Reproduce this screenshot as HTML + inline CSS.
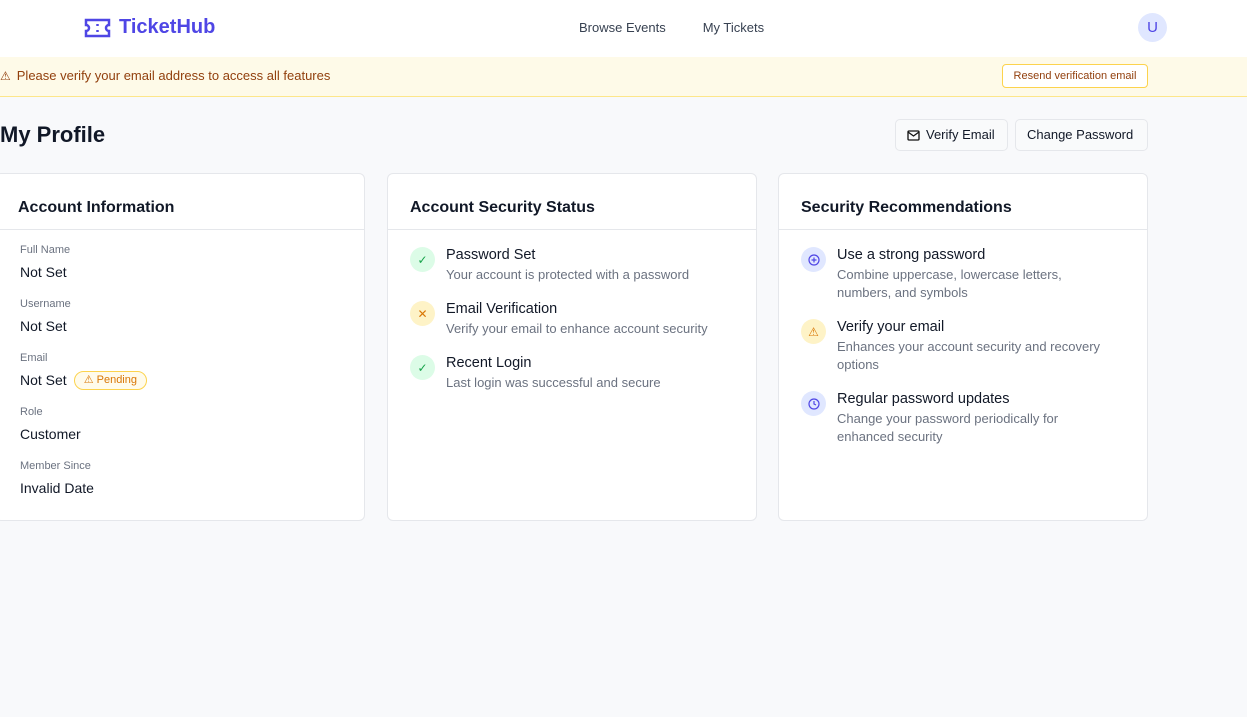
<!DOCTYPE html>
<html><head><meta charset="utf-8"><style>
*{box-sizing:border-box;margin:0;padding:0}
body{width:1247px;height:717px;overflow:hidden;background:#f8f9fb;font-family:"Liberation Sans",sans-serif;color:#111827}
.nav{height:57px;background:#fff;position:relative}
.logo{position:absolute;left:84px;top:16px;display:flex;align-items:center;gap:8px;color:#4f46e5;font-weight:bold;font-size:20px}
.links{position:absolute;left:579px;top:20px;font-size:13px;color:#374151}
.links span{margin-right:37px}
.av{position:absolute;left:1138px;top:13px;width:29px;height:29px;border-radius:50%;background:#e0e7ff;color:#4f46e5;font-size:15px;text-align:center;line-height:29px}
.banner{height:40px;background:#fefae8;border-bottom:1px solid #fde68a;position:relative;font-size:13px;color:#92400e}
.banner .t{position:absolute;left:0;top:11px;display:flex;gap:6px;align-items:center}
.banner .b{position:absolute;left:1002px;top:7px;width:146px;height:24px;border:1px solid #fcd34d;border-radius:4px;background:#fff;font-size:11px;text-align:center;line-height:22px;color:#92400e}
h1{position:absolute;left:0;top:122px;font-size:22px;font-weight:bold}
.btn{position:absolute;top:119px;height:32px;border:1px solid #e5e7eb;border-radius:5px;background:#f9fafb;font-size:13px;line-height:30px;padding:0 11px;display:flex;align-items:center;gap:6px}
.card{position:absolute;top:173px;width:370px;height:348px;background:#fff;border:1px solid #e5e7eb;border-radius:6px}
.card h2{font-size:16px;font-weight:bold;padding:25px 0 0 22px;height:56px;border-bottom:1px solid #e5e7eb}
.lbl{font-size:11px;color:#6b7280;margin-top:18px;line-height:13px}
.lbl:first-child{margin-top:12px}
.val{font-size:14px;margin-top:7px;display:flex;align-items:center;gap:7px;height:16px}
.it{display:flex;gap:11px;margin-bottom:17px}
.ic{width:25px;height:25px;border-radius:50%;flex:none;display:flex;align-items:center;justify-content:center;font-size:12px}
.it b{font-weight:normal;font-size:14.5px;display:block;margin-bottom:3px}
.it p{font-size:13px;color:#6b7280;line-height:18px}
</style></head><body>
<div class="nav">
<div class="logo"><svg width="27" height="20" viewBox="0 0 27 20" fill="none" stroke="#4f46e5" stroke-width="2.5"><path d="M2 2h23v5a3 3 0 0 0 0 6v5H2v-5a3 3 0 0 0 0-6z"/><path d="M13.5 6v2M13.5 12v2"/></svg>TicketHub</div>
<div class="links"><span>Browse Events</span><span>My Tickets</span></div>
<div class="av">U</div>
</div>
<div class="banner"><div class="t"><span style="font-size:12px">⚠</span>Please verify your email address to access all features</div><div class="b">Resend verification email</div></div>
<h1>My Profile</h1>
<div class="btn" style="left:895px;width:113px"><svg width="13" height="11" viewBox="0 0 13 11" fill="none" stroke="#111" stroke-width="1.3"><rect x="1" y="1" width="11" height="9" rx="1"/><path d="M1 2l5.5 4L12 2"/></svg>Verify Email</div>
<div class="btn" style="left:1015px;width:133px">Change Password</div>

<div class="card" style="left:-5px"><h2>Account Information</h2><div style="padding:2px 0 0 24px">
<div class="lbl">Full Name</div><div class="val">Not Set</div>
<div class="lbl">Username</div><div class="val">Not Set</div>
<div class="lbl">Email</div><div class="val">Not Set <span style="font-size:11px;color:#d97706;background:#fffbeb;border:1px solid #fcd34d;border-radius:10px;padding:0 9px;line-height:17px">⚠ Pending</span></div>
<div class="lbl">Role</div><div class="val">Customer</div>
<div class="lbl">Member Since</div><div class="val">Invalid Date</div></div></div>

<div class="card" style="left:387px"><h2>Account Security Status</h2><div style="padding:17px 0 0 22px">
<div class="it"><div class="ic" style="background:#dcfce7;color:#16a34a">✓</div><div><b>Password Set</b><p>Your account is protected with a password</p></div></div>
<div class="it"><div class="ic" style="background:#fef3c7;color:#d97706">✕</div><div><b>Email Verification</b><p>Verify your email to enhance account security</p></div></div>
<div class="it"><div class="ic" style="background:#dcfce7;color:#16a34a">✓</div><div><b>Recent Login</b><p>Last login was successful and secure</p></div></div>
</div></div>

<div class="card" style="left:778px"><h2>Security Recommendations</h2><div style="padding:17px 30px 0 22px">
<div class="it"><div class="ic" style="background:#e0e7ff;color:#4f46e5"><svg width="12" height="12" viewBox="0 0 12 12" fill="none" stroke="#4f46e5" stroke-width="1.2"><circle cx="6" cy="6" r="5"/><path d="M6 3.5v5M3.5 6h5"/></svg></div><div><b>Use a strong password</b><p>Combine uppercase, lowercase letters, numbers, and symbols</p></div></div>
<div class="it"><div class="ic" style="background:#fef3c7;color:#d97706">⚠</div><div><b>Verify your email</b><p>Enhances your account security and recovery options</p></div></div>
<div class="it"><div class="ic" style="background:#e0e7ff"><svg width="12" height="12" viewBox="0 0 12 12" fill="none" stroke="#4f46e5" stroke-width="1.2"><circle cx="6" cy="6" r="5"/><path d="M6 3v3l2 1"/></svg></div><div><b>Regular password updates</b><p>Change your password periodically for enhanced security</p></div></div>
</div></div>
</body></html>
